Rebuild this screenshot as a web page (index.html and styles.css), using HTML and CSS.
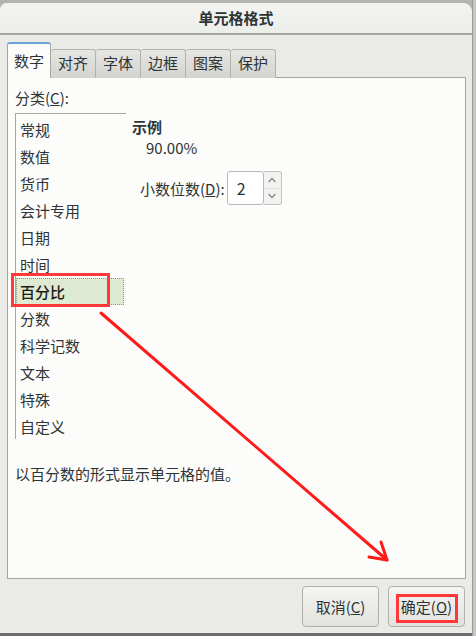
FILE: index.html
```html
<!DOCTYPE html>
<html lang="zh">
<head>
<meta charset="utf-8">
<link rel="stylesheet" href="styles.css">
</head>
<body>
<div class="desktop">
  <div class="window">
    <div class="titlebar">单元格格式</div>
    <div class="content">
      <div class="tabs">
        <div class="tab active">数字</div>
        <div class="tab">对齐</div>
        <div class="tab">字体</div>
        <div class="tab">边框</div>
        <div class="tab">图案</div>
        <div class="tab">保护</div>
      </div>
      <div class="panel">
        <div class="label">分类(<u>C</u>):</div>
        <div class="main">
          <div class="list">
            <div class="item">常规</div>
            <div class="item">数值</div>
            <div class="item">货币</div>
            <div class="item">会计专用</div>
            <div class="item">日期</div>
            <div class="item">时间</div>
            <div class="item selected">百分比<span class="mark"></span></div>
            <div class="item">分数</div>
            <div class="item">科学记数</div>
            <div class="item">文本</div>
            <div class="item">特殊</div>
            <div class="item">自定义</div>
          </div>
          <div class="side">
            <div class="sample-title">示例</div>
            <div class="sample">90.00%</div>
            <div class="decimals">
              <span class="dlabel">小数位数(<u>D</u>):</span>
              <div class="input">2</div>
              <div class="spin">
                <div class="spin-btn"><svg width="10" height="6" viewBox="0 0 10 6"><path d="M1.5 5 L5 1.5 L8.5 5" fill="none" stroke="#8a8a8a" stroke-width="1.4"/></svg></div>
                <div class="spin-btn"><svg width="10" height="6" viewBox="0 0 10 6"><path d="M1.5 1 L5 4.5 L8.5 1" fill="none" stroke="#8a8a8a" stroke-width="1.4"/></svg></div>
              </div>
            </div>
          </div>
        </div>
        <div class="desc">以百分数的形式显示单元格的值。</div>
      </div>
    </div>
    <div class="buttons">
      <div class="btn">取消(<u>C</u>)</div>
      <div class="btn">确定(<u>O</u>)<span class="mark2"></span></div>
    </div>
  </div>
  <svg class="arrow" width="476" height="636" viewBox="0 0 476 636">
    <path d="M101 313 L387 560" stroke="#ff1a1a" stroke-width="3" fill="none" stroke-linecap="round"/>
    <path d="M387 560 L381 542 M387 560 L369 557" stroke="#ff1a1a" stroke-width="3" fill="none" stroke-linecap="round"/>
  </svg>
</div>
</body>
</html>
```
FILE: styles.css
```css
* { box-sizing: border-box; }
html, body { margin: 0; padding: 0; }
body {
  width: 476px;
  height: 636px;
  overflow: hidden;
  background: #b3b3b1;
  font-family: "Noto Sans CJK SC", "Noto Sans", sans-serif;
  font-size: 15px;
  color: #2e3436;
}
.desktop {
  position: relative;
  width: 476px;
  height: 636px;
  padding-top: 3px;
  background:
    linear-gradient(to right, transparent 472px, #9c9c9a 472px, #9c9c9a 473px, #c6c6c4 473px),
    #b3b3b1;
}
.window {
  width: 472px;
  background: #eaebe7;
  border-radius: 7px 9px 0 0;
  display: flex;
  flex-direction: column;
  border-bottom: 3px solid #6d6d6b;
  height: 633px;
}
.titlebar {
  height: 32px;
  flex: none;
  background: linear-gradient(#f3f4f1, #eceee9);
  border-radius: 7px 9px 0 0;
  border-bottom: 2px solid #a4a5a1;
  text-align: center;
  font-weight: bold;
  font-size: 15px;
  line-height: 30px;
  color: #2e3436;
}
.content {
  padding: 8px 6px 0 7px;
  display: flex;
  flex-direction: column;
}
.tabs {
  display: flex;
  align-items: flex-end;
  height: 35px;
  position: relative;
  z-index: 1;
  margin-bottom: -1px;
}
.tab {
  width: 45px;
  height: 29px;
  border: 1px solid #b2b3af;
  border-bottom: none;
  border-left: none;
  border-radius: 3px 3px 0 0;
  background: linear-gradient(#e6e7e3, #d3d4d0);
  text-align: center;
  line-height: 26px;
  color: #2e3436;
}
.tab.active {
  width: 44px;
  height: 36px;
  background: #fcfcfa;
  border: 1px solid #a5a6a2;
  border-top: 2px solid #6fa2d8;
  border-bottom: none;
  line-height: 33px;
}
.panel {
  height: 502px;
  background: #fcfcfa;
  border: 1px solid #a5a6a2;
  padding: 9px 0 0 7px;
  display: flex;
  flex-direction: column;
}
.label {
  height: 26px;
  line-height: 22px;
}
.main {
  display: flex;
  height: 338px;
}
.list {
  width: 111px;
  border-top: 1px solid #a5a6a2;
  border-left: 1px solid #a5a6a2;
  padding-top: 2px;
  height: 326px;
}
.item {
  height: 27px;
  line-height: 27px;
  padding-left: 4px;
  position: relative;
}
.item.selected {
  background: #deebd2;
  outline: 1px dotted #8a9a88;
  outline-offset: -1px;
  margin-right: 2px;
  font-weight: 500;
  color: #1a1a1a;
}
.mark {
  position: absolute;
  left: -5px;
  top: -5px;
  width: 99px;
  height: 34px;
  border: 3px solid #ff3838;
}
.side {
  padding-left: 6px;
  padding-top: 4px;
}
.sample-title {
  font-weight: bold;
  line-height: 20px;
}
.sample {
  padding-left: 14px;
  line-height: 22px;
}
.decimals {
  display: flex;
  align-items: center;
  margin-top: 12px;
  padding-left: 8px;
}
.dlabel { margin-right: 2px; }
.input {
  width: 37px;
  height: 34px;
  border: 1px solid #b8b9b5;
  border-radius: 3px;
  background: #fff;
  padding-left: 9px;
  line-height: 32px;
  font-size: 16px;
}
.spin {
  width: 18px;
  height: 34px;
  border: 1px solid #c4c5c1;
  border-left: none;
  border-radius: 0 3px 3px 0;
  background: #f2f2f0;
  display: flex;
  flex-direction: column;
}
.spin-btn {
  flex: 1;
  display: flex;
  align-items: center;
  justify-content: center;
}
.spin-btn + .spin-btn { border-top: 1px solid #dcdcda; }
.desc {
  margin-top: 12px;
  line-height: 22px;
}
.buttons {
  display: flex;
  justify-content: flex-end;
  gap: 9px;
  padding: 7px 7px 0 0;
}
.btn {
  width: 77px;
  height: 41px;
  border: 1px solid #b0b1ad;
  border-radius: 4px;
  background: linear-gradient(#f4f5f2, #e2e3df);
  text-align: center;
  line-height: 39px;
  position: relative;
  color: #2e3436;
}
.mark2 {
  position: absolute;
  left: 7px;
  top: 7px;
  width: 62px;
  height: 29px;
  border: 3px solid #ff3838;
}
.arrow {
  position: absolute;
  left: 0;
  top: 0;
  pointer-events: none;
}
```
